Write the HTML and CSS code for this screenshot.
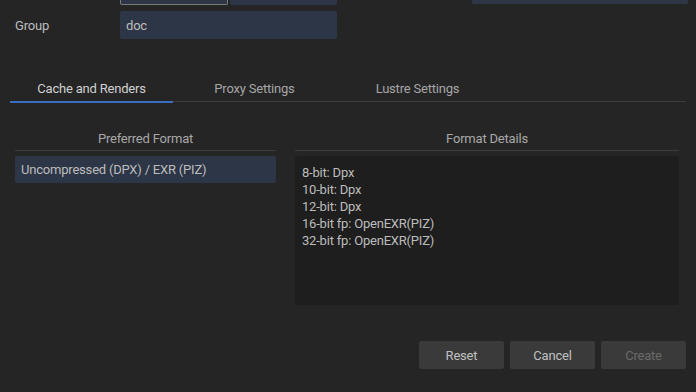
FILE: index.html
```html
<!DOCTYPE html>
<html>
<head>
    <meta charset="utf-8" />
    <title>Create Project</title>
    <link rel="stylesheet" href="styles.css">
</head>
<body>
    <div class="top-row">
        <div class="stub stub-focus"></div>
        <div class="stub stub-second"></div>
        <div class="stub stub-right"></div>
    </div>
    <div class="field-row">
        <label class="field-label">Group</label>
        <div class="field-input">doc</div>
    </div>
    <div class="tabs">
        <div class="tab active">Cache and Renders</div>
        <div class="tab">Proxy Settings</div>
        <div class="tab">Lustre Settings</div>
        <div class="tab-rest"></div>
    </div>
    <div class="panels">
        <div class="panel panel-left">
            <div class="panel-title">Preferred Format</div>
            <div class="list-item">Uncompressed (DPX) / EXR (PIZ)</div>
        </div>
        <div class="panel panel-right">
            <div class="panel-title">Format Details</div>
            <div class="details">
                <div>8-bit: Dpx</div>
                <div>10-bit: Dpx</div>
                <div>12-bit: Dpx</div>
                <div>16-bit fp: OpenEXR(PIZ)</div>
                <div>32-bit fp: OpenEXR(PIZ)</div>
            </div>
        </div>
    </div>
    <div class="buttons">
        <button class="btn">Reset</button>
        <button class="btn">Cancel</button>
        <button class="btn" disabled>Create</button>
    </div>
</body>
</html>
```

FILE: styles.css
```css
body {
    background-color: #252525;
    color: #c4c4c4;
    font-family: Roboto, "Liberation Sans", sans-serif;
    font-size: 13px;
    letter-spacing: -0.2px;
    margin: 0;
    width: 696px;
    height: 392px;
    overflow: hidden;
}

.top-row {
    display: flex;
    height: 5px;
    padding-left: 120px;
}

.stub {
    height: 5px;
    background-color: #2d3646;
    border-radius: 0 0 2px 2px;
    box-sizing: border-box;
}

.stub-focus {
    width: 108px;
    border: 1px solid #7a7a7a;
    border-top: none;
}

.stub-second {
    width: 107px;
    margin-left: 2px;
}

.stub-right {
    width: 216px;
    height: 4px;
    margin-left: 135px;
}

.field-row {
    display: flex;
    align-items: center;
    margin-top: 6px;
    height: 28px;
}

.field-label {
    width: 105px;
    padding-left: 15px;
    color: #bcbcbc;
}

.field-input {
    width: 217px;
    height: 28px;
    line-height: 29px;
    background-color: #2d3646;
    border-radius: 2px;
    padding-left: 6px;
    box-sizing: border-box;
    color: #bcbcbc;
}

.tabs {
    display: flex;
    margin: 42px 10px 0 10px;
}

.tab {
    width: 163px;
    text-align: center;
    color: #a6a6a6;
    padding-bottom: 5px;
    border-bottom: 1px solid #3c3c3c;
    margin-bottom: 1px;
}

.tab.active {
    color: #d0d0d0;
    border-bottom: 2px solid #3b6cc0;
    margin-bottom: 0;
}

.tab-rest {
    width: 187px;
    border-bottom: 1px solid #3c3c3c;
    margin-bottom: 1px;
}

.panels {
    display: flex;
    gap: 19px;
    margin: 28px 17px 0 15px;
}

.panel-title {
    text-align: center;
    color: #a8a8a8;
    padding-bottom: 4px;
    border-bottom: 1px solid #3c3c3c;
    margin-bottom: 5px;
}

.panel-left {
    width: 261px;
}

.panel-right {
    width: 384px;
}

.list-item {
    height: 27px;
    line-height: 28px;
    background-color: #2d3646;
    border-radius: 2px;
    padding-left: 6px;
    color: #bcbcbc;
}

.details {
    height: 149px;
    background-color: #1e1e1e;
    border-radius: 3px;
    padding: 8px 7px;
    box-sizing: border-box;
    line-height: 17px;
    color: #bcbcbc;
}

.buttons {
    display: flex;
    justify-content: flex-end;
    gap: 6px;
    margin: 36px 10px 0 0;
}

.btn {
    width: 85px;
    height: 28px;
    background-color: #3a3a3a;
    color: #c0c0c0;
    border: none;
    border-radius: 2px;
    font-family: inherit;
    font-size: 13px;
    letter-spacing: -0.2px;
}

.btn:disabled {
    color: #6a6a6a;
}
```
